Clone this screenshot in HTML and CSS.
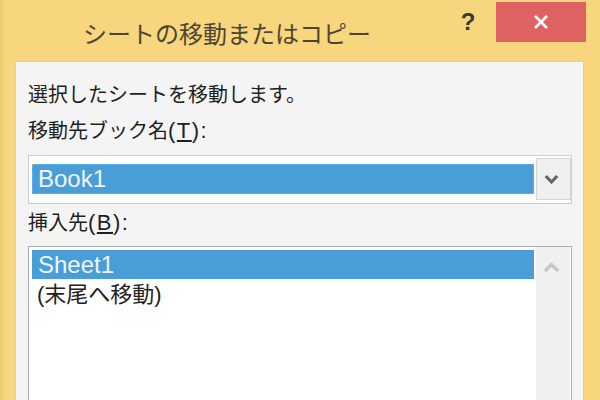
FILE: index.html
```html
<!DOCTYPE html>
<html lang="ja">
<head>
<meta charset="utf-8">
<title>シートの移動またはコピー</title>
<link rel="stylesheet" href="styles.css">
</head>
<body>
<div class="window">
  <div class="titlebar">
    <div class="title">シートの移動またはコピー</div>
    <div class="help">?</div>
    <div class="close">
      <svg width="16" height="16" viewBox="0 0 16 16"><path d="M2 2 L14 14 M14 2 L2 14" stroke="#fff" stroke-width="2.6" fill="none"/></svg>
    </div>
  </div>
  <div class="panel">
    <p class="label">選択したシートを移動します。</p>
    <p class="label">移動先ブック名<span class="ak">(<u>T</u>):</span></p>
    <div class="combo">
      <div class="combo-field"><div class="combo-value">Book1</div></div>
      <div class="combo-btn">
        <svg width="15" height="11" viewBox="0 0 15 11"><path d="M1.8 2 L7.5 8 L13.2 2" stroke="#676767" stroke-width="3.2" fill="none"/></svg>
      </div>
    </div>
    <p class="label">挿入先<span class="ak">(<u>B</u>):</span></p>
    <div class="list">
      <div class="list-items">
        <div class="item selected">Sheet1</div>
        <div class="item">(末尾へ移動)</div>
      </div>
      <div class="scrollbar">
        <svg width="17" height="11" viewBox="0 0 17 11"><path d="M1.8 9 L8.5 2.5 L15.2 9" stroke="#c6c6c6" stroke-width="3.2" fill="none"/></svg>
      </div>
    </div>
  </div>
</div>
</body>
</html>
```

FILE: styles.css
```css
html, body {
  margin: 0;
  padding: 0;
}
body {
  font-family: "Noto Sans CJK JP", "Noto Sans", sans-serif;
  color: #1f1f1f;
}
.window {
  width: 600px;
  height: 400px;
  background: #f7d67d;
  overflow: hidden;
  display: flex;
  flex-direction: column;
  box-shadow: inset 3px 0 0 #f0cc70;
}
.titlebar {
  height: 61px;
  flex: none;
  display: flex;
  align-items: flex-start;
}
.title {
  flex: 1;
  padding-left: 83px;
  margin-top: 19px;
  font-size: 24px;
  line-height: 28px;
  color: #4d4633;
  white-space: nowrap;
}
.help {
  width: 24px;
  margin-top: 7px;
  text-align: center;
  font-family: "Liberation Sans", sans-serif;
  font-weight: bold;
  font-size: 24px;
  line-height: 30px;
  color: #3a3a3a;
}
.close {
  width: 90px;
  height: 40px;
  margin: 2px 14px 0 16px;
  background: #de6262;
  display: flex;
  align-items: center;
  justify-content: center;
}
.panel {
  flex: 1;
  margin-left: 15px;
  width: 569px;
  box-sizing: border-box;
  border: 1px solid #ead08a;
  border-bottom: none;
  background: #f4f4f4;
  padding: 14px 11px 0 12px;
}
.label {
  margin: 0;
  font-size: 20px;
  line-height: 36px;
  white-space: nowrap;
}
.ak {
  font-family: "Liberation Sans", sans-serif;
  font-size: 22px;
  letter-spacing: 1.5px;
}
.ak u {
  text-underline-offset: 2px;
}
.combo {
  margin-top: 6px;
  height: 49px;
  box-sizing: border-box;
  border: 1px solid #cdcdcd;
  background: #fff;
  display: flex;
}
.combo-field {
  flex: 1;
  padding: 8px 1px 9px 3px;
}
.combo-value {
  height: 30px;
  box-sizing: border-box;
  border: 1px dotted #eda23a;
  background: #4a9ed8;
  color: #eef5fc;
  font-family: "Liberation Sans", sans-serif;
  font-size: 24px;
  line-height: 28px;
  padding-left: 5px;
}
.combo-btn {
  width: 35px;
  margin: 2px 0 3px 1px;
  box-sizing: border-box;
  border: 1px solid #d6d6d6;
  background: #f0f0f0;
  display: flex;
  align-items: center;
  justify-content: center;
  padding-right: 4px;
}
.list {
  margin-top: 5px;
  height: 170px;
  box-sizing: border-box;
  border: 1px solid #adadad;
  background: #fff;
  display: flex;
}
.list-items {
  flex: 1;
  padding: 3px 0 0 3px;
}
.item {
  font-family: "Liberation Sans", "Noto Sans CJK JP", sans-serif;
  font-size: 22px;
  height: 32px;
  line-height: 32px;
  padding-left: 5px;
  color: #222;
  white-space: nowrap;
}
.item.selected {
  height: 29px;
  line-height: 29px;
  padding-left: 6px;
  font-size: 24px;
  background: #4a9ed8;
  color: #eef5fc;
}
.scrollbar {
  width: 34px;
  margin-left: 2px;
  margin-right: 1px;
  background: #f0f0f0;
  display: flex;
  justify-content: center;
  align-items: flex-start;
  padding-top: 15px;
  padding-right: 3px;
  box-sizing: border-box;
}
```
